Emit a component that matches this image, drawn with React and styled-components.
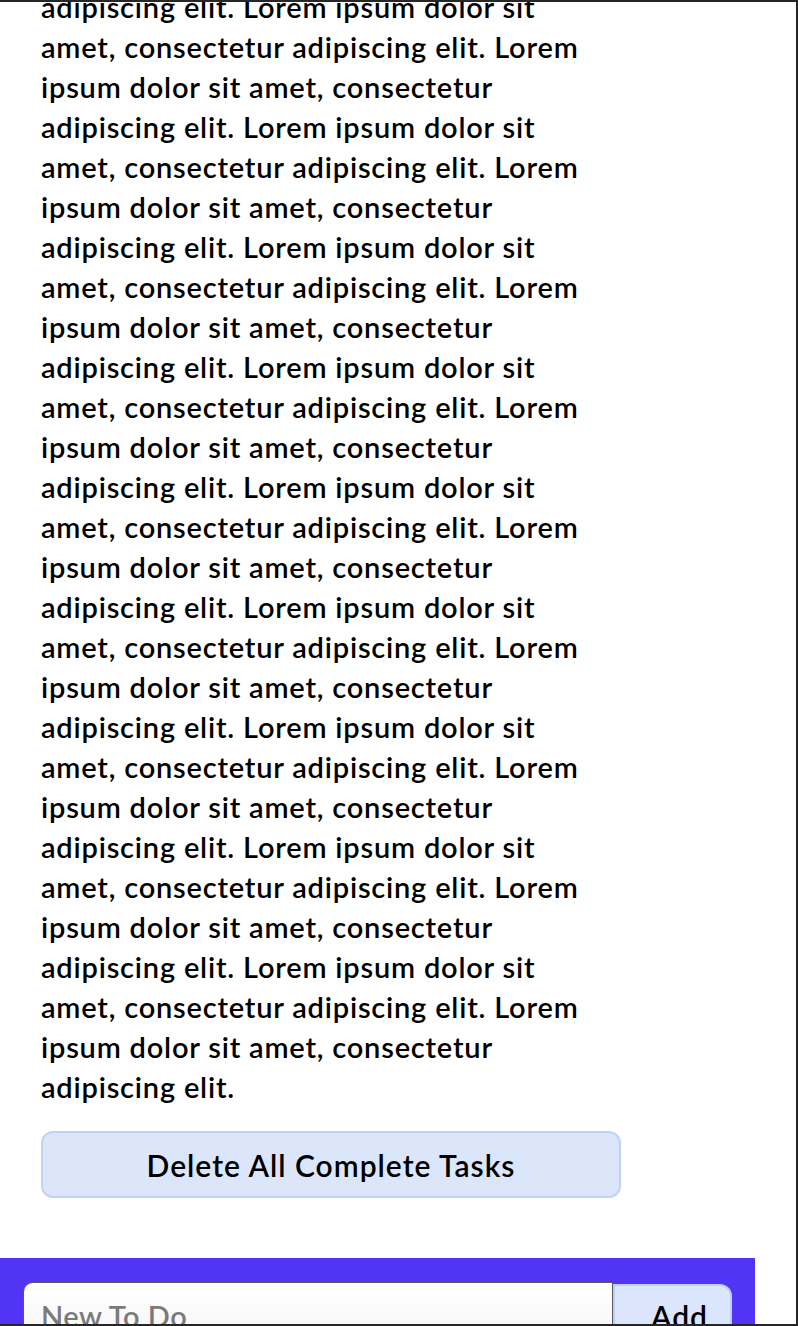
import { useLayoutEffect, useRef } from "react";
import styled, { createGlobalStyle } from "styled-components";

const GlobalStyle = createGlobalStyle`
    html, body {
        margin: 0;
        padding: 0;
        background-color: #FFFFFF;
        overflow: hidden;
    }
    * {
        box-sizing: border-box;
    }
`

const Frame = styled.div`
    height: 100vh;
    border-top: 2px solid #262626;
    border-right: 2px solid #262626;
    border-bottom: 2px solid #262626;
    display: flex;
    flex-direction: column;
    font-family: "Lato", "Open Sans", sans-serif;
    color: #000000;
`
const Scroller = styled.main`
    flex: 1;
    overflow: hidden;
`
const TaskList = styled.section`
    width: 621px;
    padding: 24px 0 0 41px;
    display: flex;
    flex-direction: column;
    gap: 24px;
`
const TaskText = styled.p`
    margin: 0;
    max-width: 565px;
    font-size: 29px;
    font-weight: 600;
    letter-spacing: 0.8px;
    line-height: 40px;
`
const DeleteButton = styled.button`
    width: 100%;
    height: 67px;
    background-color: #dce6fa;
    border: 2px solid #c0d3f6;
    border-radius: 12px;
    font-family: inherit;
    font-size: 30px;
    font-weight: 600;
    letter-spacing: 1px;
    color: #000000;
    cursor: pointer;
`
const Footer = styled.footer`
    width: 755px;
    margin-top: 60px;
    padding: 24px 0 24px 23px;
    background-color: #5234f5;
    display: flex;
    align-items: flex-start;
`
const NewTodoInput = styled.input`
    width: 590px;
    height: 66px;
    padding: 0 0 0 17px;
    border: 1px solid #5a5a5a;
    border-radius: 10px 0 0 0;
    background: linear-gradient(#ffffff, #f4f4f4);
    font-family: inherit;
    font-size: 29px;
    font-weight: 600;
    letter-spacing: 0.5px;
    color: #000000;

    &::placeholder{
        color: #7a7a7a;
    }
`
const AddButton = styled.button`
    width: 119px;
    height: 64px;
    margin-top: 2px;
    padding: 0 0 0 14px;
    background-color: #dbe5fb;
    border: 2px solid #bccff5;
    border-radius: 0 12px 0 0;
    font-family: inherit;
    font-size: 30px;
    font-weight: 600;
    letter-spacing: 1px;
    color: #000000;
`

const SENTENCE = "Lorem ipsum dolor sit amet, consectetur adipiscing elit.";
const texto = Array(33).fill(SENTENCE).join(" ");

const App = () => {
    const scrollerRef = useRef(null);
    const botaoRef = useRef(null);

    // the page is shown scrolled down, with the delete button at y=1131
    useLayoutEffect(() => {
        const alinhar = () => {
            const scroller = scrollerRef.current;
            const botao = botaoRef.current;
            if (!scroller || !botao) return;
            const topo = botao.getBoundingClientRect().top;
            scroller.scrollTop += topo - 1131;
        };
        alinhar();
        if (document.fonts) document.fonts.ready.then(alinhar);
    }, []);

    return(
        <>
            <GlobalStyle />
            <Frame>
                <Scroller ref={scrollerRef}>
                    <TaskList>
                        <TaskText>{texto}</TaskText>
                        <DeleteButton ref={botaoRef}>Delete All Complete Tasks</DeleteButton>
                    </TaskList>
                    <Footer>
                        <NewTodoInput placeholder="New To Do" />
                        <AddButton>Add</AddButton>
                    </Footer>
                </Scroller>
            </Frame>
        </>
    )
}

export default App;
